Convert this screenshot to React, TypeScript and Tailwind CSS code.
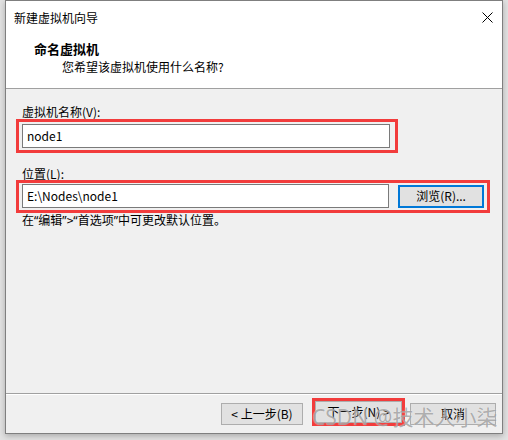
import React from 'react';

const font = { fontFamily: '"Noto Sans CJK SC", "Noto Sans", sans-serif' };

function WinButton({ label, className = '' }: { label: string; className?: string }) {
  return (
    <div
      className={`h-[22px] flex items-center justify-center border border-[#adadad] bg-[#e1e1e1] text-[12px] leading-[12px] text-black ${className}`}
    >
      {label}
    </div>
  );
}

// narrow curly quotes, as the dialog font draws them
function Q({ c }: { c: string }) {
  return <span className="font-['Noto_Sans',sans-serif]">{c}</span>;
}

export default function App() {
  return (
    <div className="relative w-[508px] h-[440px] overflow-hidden bg-[#e2e2e2]" style={font}>
      {/* dialog */}
      <div className="ml-[5px] w-[498px] h-[434px] flex flex-col border border-[#7f7f7f] bg-[#f0f0f0] shadow-[0_2px_6px_rgba(0,0,0,0.25)]">
        {/* title + header */}
        <div className="bg-white border-b border-[#a0a0a0] h-[88px]">
          <div className="h-[33px] flex items-center justify-between pl-[8px] pr-[8px]">
            <span className="text-[12px] leading-[12px] text-black">新建虚拟机向导</span>
            <svg width="11" height="11" viewBox="0 0 11 11" className="mr-[1px]">
              <path d="M0.5 0.5 L10.5 10.5 M10.5 0.5 L0.5 10.5" stroke="#000" strokeWidth="1" />
            </svg>
          </div>
          <div className="pt-[8px] pl-[28px] text-[13px] leading-[14px] font-bold text-black">命名虚拟机</div>
          <div className="mt-[4px] pl-[56px] text-[12px] leading-[14px] text-black">您希望该虚拟机使用什么名称?</div>
        </div>

        {/* body */}
        <div className="flex-1 flex flex-col pt-[17px] pl-[10px]">
          <div className="pl-[6px] text-[12px] leading-[12px] text-black">虚拟机名称(V):</div>
          <div className="mt-[1px] w-[382px] border-[3px] border-[#f23c3c] pl-[3px] pr-[5px] py-[2px]">
            <div className="h-[24px] border border-[#7a7a7a] bg-white flex items-center pl-[4px] text-[12px] text-black">
              node1
            </div>
          </div>

          <div className="mt-[15px] pl-[6px] text-[12px] leading-[12px] text-black">位置(L):</div>
          <div className="w-[474px] border-[3px] border-[#f23c3c] pl-[3px] pr-[3px] pt-[1px] pb-[2px] flex items-center">
            <div className="w-[368px] h-[24px] border border-[#7a7a7a] bg-white flex items-center pl-[4px] text-[12px] text-black">
              E:\Nodes\node1
            </div>
            <div className="ml-[9px] w-[86px] h-[23px] border-2 border-[#0078d7] bg-[#e1e1e1] flex items-center justify-center text-[12px] leading-[12px] text-black">
              浏览(R)...
            </div>
          </div>
          <div className="pl-[6px] mt-[1px] text-[12px] leading-[12px] text-black">
            在<Q c="“" />编辑<Q c="”" />&gt;<Q c="“" />首选项<Q c="”" />中可更改默认位置。
          </div>
        </div>

        {/* footer */}
        <div className="h-[40px] border-t border-[#a0a0a0] shadow-[inset_0_1px_0_#ffffff] flex items-start justify-end pt-[9px] pr-[6px]">
          <WinButton label="< 上一步(B)" className="w-[82px]" />
          <div className="ml-[9px] border-[3px] border-[#f23c3c] -mt-[5px]">
            <WinButton label="下一步(N) >" className="w-[87px]" />
          </div>
          <WinButton label="取消" className="ml-[5px] w-[86px]" />
        </div>
      </div>

      {/* watermark */}
      <div
        className="absolute left-[312px] top-[405px] text-[21px] leading-[24px] text-[rgba(110,110,110,0.55)] whitespace-nowrap pointer-events-none [text-shadow:0_0_1px_rgba(255,255,255,0.8)]"
        style={{ fontFamily: '"Noto Sans", "Noto Sans CJK SC", sans-serif' }}
      >
        CSDN @技术人小柒
      </div>
    </div>
  );
}
